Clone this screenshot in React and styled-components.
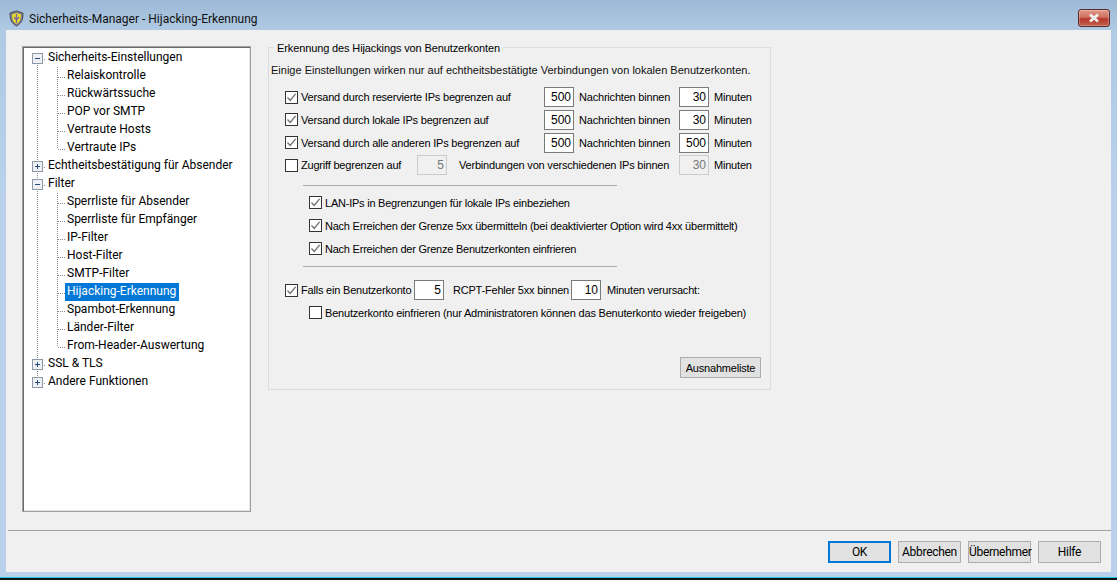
import React from 'react';
import styled, { createGlobalStyle } from 'styled-components';

const Global = createGlobalStyle`
  html, body { margin: 0; padding: 0; background: #b9d1ea; }
  * { box-sizing: border-box; }
`;

const Win = styled.div`
  width: 1117px; height: 580px; display: flex; flex-direction: column; overflow: hidden;
  background: linear-gradient(180deg, #9db9d5 0, #b0cae4 30px, #b9d1ea 200px);
  font-family: "Liberation Sans", Arial, sans-serif; color: #000;
`;
const TitleBar = styled.div`
  height: 30px; flex: none; display: flex; align-items: flex-start; padding: 10px 7px 0 8px;
`;
const TitleText = styled.div`
  margin-left: 4px; font: 12px/18px Roboto, sans-serif; color: #111; flex: 1;
`;
const Close = styled.div`
  width: 32px; height: 18px; border-radius: 3px; border: 1px solid #5b2a2a; display: flex; align-items: center; justify-content: center;
  margin-top: -1px;
  background: linear-gradient(180deg, #e09a8a 0, #cf7160 45%, #b5382a 55%, #c0604e 100%);
  box-shadow: inset 0 0 0 1px rgba(255,255,255,.25);
`;
const Client = styled.div`
  flex: none; height: 542px; margin: 0 6px; background: #f0f0f0; display: flex; flex-direction: column;
`;
const Main = styled.div`
  height: 500px; flex: none; display: flex; padding: 16px 0 0 16px; align-items: flex-start;
`;
const Tree = styled.div`
  width: 229px; height: 466px; flex: none; position: relative; background: #fff;
  border: 1px solid #a0a0a0;
  box-shadow: inset 1px 1px 0 #696969, inset -1px -1px 0 #e3e3e3;
  padding: 2px 0 0 0;
  font: 12px Roboto, sans-serif;
`;
const Guides = styled.svg`
  position: absolute; left: 0; top: 1px; width: 227px; height: 400px; pointer-events: none;
`;
const TreeRow = styled.div`
  height: 18px; display: flex; align-items: center; position: relative;
  padding-left: ${p => (p.$child ? 42 : 23)}px;
`;
const TreeLabel = styled.span`
  padding: 0 ${p => (p.$sel ? 3 : 1)}px 0 2px; height: 18px; line-height: 17px; white-space: nowrap;
  background: ${p => (p.$sel ? '#0078d7' : 'transparent')};
  color: ${p => (p.$sel ? '#fff' : '#000')};
`;
const Exp = styled.svg`
  position: absolute; left: 9px; top: 4px; width: 11px; height: 11px;
`;
const Group = styled.div`
  margin: 1px 0 0 17px; width: 503px; height: 343px; flex: none; position: relative;
  border: 1px solid #dcdcdc; padding: 14px 0 0 16px;
  font-size: 11px; letter-spacing: -0.2px;
`;
const Legend = styled.div`
  position: absolute; left: 5px; top: -6px; background: #f0f0f0; padding: 0 3px; line-height: 13px; white-space: nowrap;
  letter-spacing: -0.12px;
`;
const Intro = styled.div`
  margin-left: -14px; height: 16px; line-height: 16px; white-space: nowrap; color: #111; letter-spacing: 0;
`;
const Limits = styled.div`
  margin-top: 9px; display: flex; flex-direction: column; gap: 2.8px;
`;
const LimitRow = styled.div`
  height: 20px; display: grid; align-items: center;
  grid-template-columns: ${p => p.$cols || '259px 30px 105px 30px auto'};
`;
const Check = styled.label`
  display: flex; align-items: center; gap: 3px; white-space: nowrap; line-height: 14px;
`;
const Box = styled.span`
  width: 13px; height: 13px; flex: none; background: #fff; border: 1px solid #333; display: block; position: relative;
`;
const Tick = styled.svg`
  position: absolute; left: 0; top: 0; width: 11px; height: 11px;
`;
const Field = styled.div`
  width: 30px; height: 20px; border: 1px solid ${p => (p.$off ? '#ccc' : '#7a7a7a')};
  background: ${p => (p.$off ? '#f0f0f0' : '#fff')}; color: ${p => (p.$off ? '#777' : '#000')};
  text-align: right; padding-right: 2px; line-height: 18px; font-size: 12px; letter-spacing: 0;
`;
const Caption = styled.span`
  padding-left: ${p => p.$pad ?? 5}px; white-space: nowrap;
`;
const Rule = styled.div`
  width: 314px; height: 1px; background: #a9a9a9; margin: ${p => p.$top}px 0 0 18px;
`;
const Nested = styled.div`
  margin: 5px 0 0 24px; display: flex; flex-direction: column;
`;
const NestedRow = styled.div`
  height: 23px; display: flex; align-items: center; letter-spacing: -0.23px;
`;
const Freeze = styled.div`
  margin-top: 13px;
`;
const FreezeNote = styled.div`
  margin: 1px 0 0 24px; height: 23px; display: flex; align-items: center;
`;
const ListBtn = styled.button`
  position: absolute; left: 411px; top: 309px; width: 81px; height: 21px; padding: 0;
  font: inherit; letter-spacing: inherit; background: #e1e1e1; border: 1px solid #adadad; color: #000;
`;
const Footer = styled.div`
  flex: 1; border-top: 1px solid #a0a0a0; margin: 0 0 0 2px; display: flex; justify-content: flex-end;
  padding: 10px 10px 0 0; gap: 7px; align-items: flex-start;
`;
const Btn = styled.button`
  width: 63px; height: 22px; padding: 0; background: #e1e1e1; font: 12px Roboto, sans-serif; letter-spacing: -0.3px; color: #000; white-space: nowrap;
  border: ${p => (p.$def ? '2px solid #0078d7' : '1px solid #adadad')};
`;
const Bottom = styled.div`
  flex: 1; display: flex; flex-direction: column; justify-content: flex-end;
`;
const Edge = styled.div`
  height: 3px; background: linear-gradient(180deg, #22c6e8 0, #22c6e8 1px, #101010 1px);
`;

const Checkbox = ({ on }) => (
  <Box>
    {on && (
      <Tick viewBox="0 0 11 11">
        <path d="M1.5 5.5 L4.2 8.4 L9.6 1.8" fill="none" stroke="#6e6e6e" strokeWidth="1.3" />
      </Tick>
    )}
  </Box>
);

const Expander = ({ open }) => (
  <Exp viewBox="0 0 11 11">
    <rect x="0.5" y="0.5" width="10" height="10" fill="#eef0f4" stroke="#8e9aa8" />
    <path d={open ? 'M3 5.5H8' : 'M3 5.5H8M5.5 3V8'} stroke="#2a4a80" strokeWidth="1" />
  </Exp>
);

const items = [
  { t: 'Sicherheits-Einstellungen', root: 1, open: 1 },
  { t: 'Relaiskontrolle' }, { t: 'Rückwärtssuche' }, { t: 'POP vor SMTP' }, { t: 'Vertraute Hosts' }, { t: 'Vertraute IPs' },
  { t: 'Echtheitsbestätigung für Absender', root: 1 },
  { t: 'Filter', root: 1, open: 1 },
  { t: 'Sperrliste für Absender' }, { t: 'Sperrliste für Empfänger' }, { t: 'IP-Filter' }, { t: 'Host-Filter' }, { t: 'SMTP-Filter' },
  { t: 'Hijacking-Erkennung', sel: 1 }, { t: 'Spambot-Erkennung' }, { t: 'Länder-Filter' }, { t: 'From-Header-Auswertung' },
  { t: 'SSL & TLS', root: 1 },
  { t: 'Andere Funktionen', root: 1 },
];

const limits = [
  ['Versand durch reservierte IPs begrenzen auf', '30'],
  ['Versand durch lokale IPs begrenzen auf', '30'],
  ['Versand durch alle anderen IPs begrenzen auf', '500'],
];

const Shield = () => (
  <svg width="17" height="17" viewBox="0 0 17 17">
    <path d="M8.5 1 L15 3 C15 9 14 13 8.5 16 C3 13 2 9 2 3 Z" fill="#7d7d8c" stroke="#4c4c58" />
    <path d="M8.5 3 L13 4.5 C13 9 12 12 8.5 14 C5 12 4 9 4 4.5 Z" fill="#e6dc2a" />
    <path d="M8.5 4 V13 M6 7 L8.5 10 L11 7" stroke="#7a5fa8" strokeWidth="1.2" fill="none" />
  </svg>
);

const guideY = i => 1 + 18 * i + 10;

export default function App() {
  const roots = items.map((x, i) => (x.root ? i : -1)).filter(i => i >= 0);
  return (
    <Win>
      <Global />
      <TitleBar>
        <Shield />
        <TitleText>Sicherheits-Manager - Hijacking-Erkennung</TitleText>
        <Close>
          <svg width="14" height="10" viewBox="0 0 14 10">
            <path d="M3 1.5 L11 8.5 M11 1.5 L3 8.5" stroke="#fff" strokeWidth="2.6" />
            <path d="M3 1.5 L11 8.5 M11 1.5 L3 8.5" stroke="#4a4a5a" strokeWidth="0.5" opacity=".35" />
          </svg>
        </Close>
      </TitleBar>
      <Client>
        <Main>
          <Tree>
            <Guides viewBox="0 0 227 400">
              <g stroke="#8a8a8a" strokeDasharray="1 1" fill="none" shapeRendering="crispEdges">
                <path d={`M14.5 ${guideY(0)}V${guideY(18)}`} />
                <path d={`M34.5 ${guideY(0) + 8}V${guideY(5)}`} />
                <path d={`M34.5 ${guideY(7) + 8}V${guideY(16)}`} />
                {roots.map(i => <path key={i} d={`M19 ${guideY(i)}.5H23`} />)}
                {items.map((x, i) => (x.root ? null : <path key={i} d={`M35 ${guideY(i)}.5H42`} />))}
              </g>
            </Guides>
            {items.map(x => (
              <TreeRow key={x.t} $child={!x.root}>
                {x.root && <Expander open={x.open} />}
                <TreeLabel $sel={x.sel}>{x.t}</TreeLabel>
              </TreeRow>
            ))}
          </Tree>
          <Group>
            <Legend>Erkennung des Hijackings von Benutzerkonten</Legend>
            <Intro>Einige Einstellungen wirken nur auf echtheitsbestätigte Verbindungen von lokalen Benutzerkonten.</Intro>
            <Limits>
              {limits.map(([t, m]) => (
                <LimitRow key={t}>
                  <Check><Checkbox on />{t}</Check>
                  <Field>500</Field>
                  <Caption>Nachrichten binnen</Caption>
                  <Field>{m}</Field>
                  <Caption>Minuten</Caption>
                </LimitRow>
              ))}
              <LimitRow $cols="132px 30px 232px 30px auto">
                <Check><Checkbox />Zugriff begrenzen auf</Check>
                <Field $off>5</Field>
                <Caption $pad={12}>Verbindungen von verschiedenen IPs binnen</Caption>
                <Field $off>30</Field>
                <Caption>Minuten</Caption>
              </LimitRow>
            </Limits>
            <Rule $top={10} />
            <Nested>
              <NestedRow><Check><Checkbox on />LAN-IPs in Begrenzungen für lokale IPs einbeziehen</Check></NestedRow>
              <NestedRow><Check><Checkbox on />Nach Erreichen der Grenze 5xx übermitteln (bei deaktivierter Option wird 4xx übermittelt)</Check></NestedRow>
              <NestedRow><Check><Checkbox on />Nach Erreichen der Grenze Benutzerkonten einfrieren</Check></NestedRow>
            </Nested>
            <Rule $top={6} />
            <Freeze>
              <LimitRow $cols="129px 30px 127px 30px auto">
                <Check><Checkbox on />Falls ein Benutzerkonto</Check>
                <Field>5</Field>
                <Caption $pad={9}>RCPT-Fehler 5xx binnen</Caption>
                <Field>10</Field>
                <Caption $pad={6}>Minuten verursacht:</Caption>
              </LimitRow>
            </Freeze>
            <FreezeNote>
              <Check><Checkbox />Benutzerkonto einfrieren (nur Administratoren können das Benuterkonto wieder freigeben)</Check>
            </FreezeNote>
            <ListBtn>Ausnahmeliste</ListBtn>
          </Group>
        </Main>
        <Footer>
          <Btn $def>OK</Btn>
          <Btn>Abbrechen</Btn>
          <Btn>Übernehmer</Btn>
          <Btn>Hilfe</Btn>
        </Footer>
      </Client>
      <Bottom><Edge /></Bottom>
    </Win>
  );
}
